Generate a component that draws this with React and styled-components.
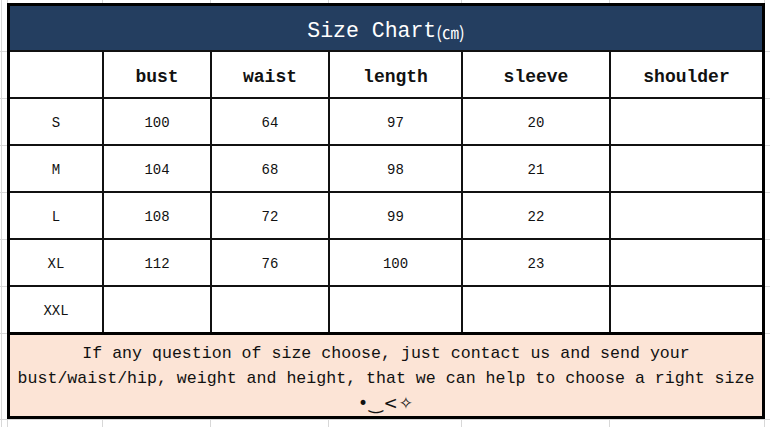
import React from 'react'
import styled, { createGlobalStyle } from 'styled-components';

const GlobalStyle = createGlobalStyle`
    html, body {
        margin: 0;
        padding: 0;
        background: #fff;
    }
`

const gridX = [1, 7, 102, 210, 328, 461, 609, 764];
const gridY = [51, 98, 145, 192, 239, 286, 333, 419];
const line = 'linear-gradient(#d8d8d8, #d8d8d8)';

const Sheet = styled.div`
    width: 770px;
    height: 427px;
    box-sizing: border-box;
    padding: 3px 0 0 7px;
    background-color: #fff;
    background-image: ${[...gridX, ...gridY].map(() => line).join(', ')};
    background-size: ${[...gridX.map(() => '1px 100%'), ...gridY.map(() => '100% 1px')].join(', ')};
    background-position: ${[...gridX.map(x => `${x}px 0`), ...gridY.map(y => `0 ${y}px`)].join(', ')};
    background-repeat: no-repeat;
    font-family: "Liberation Mono", "Noto Sans CJK SC", monospace;
    color: #111;
`

const Chart = styled.div`
    width: 758px;
    box-sizing: border-box;
    border: 3px solid #000;
    background: #fff;
`

const Title = styled.div`
    height: 44px;
    display: flex;
    align-items: center;
    justify-content: center;
    padding-top: 6px;
    box-sizing: border-box;
    background: #243e60;
    color: #fff;
    font-size: 21.5px;
`

const Unit = styled.span`
    font-size: 17px;
    font-family: "Noto Sans CJK SC", "Liberation Mono", monospace;
`

const Grid = styled.div`
    display: grid;
    grid-template-columns: 92px 108px 118px 133px 148px 1fr;
    grid-auto-rows: 47px;
`

const Cell = styled.div`
    display: flex;
    align-items: center;
    justify-content: center;
    box-sizing: border-box;
    border-top: 2px solid #111;
    border-left: ${props => props.$first ? 'none' : '2px solid #111'};
    font-size: ${props => props.$head ? '18px' : '14px'};
    font-weight: ${props => props.$head ? 'bold' : 'normal'};
    padding-top: ${props => props.$head ? '4px' : '2px'};
`

const Note = styled.div`
    height: 84px;
    box-sizing: border-box;
    border-top: 3px solid #000;
    background: #fce4d6;
    text-align: center;
    font-size: 16.6px;
    line-height: 25px;
    padding-top: 6px;
`

const Face = styled.span`
    font-family: "DejaVu Sans", sans-serif;
    font-size: 17px;
    letter-spacing: 1px;
`

const headers = ['', 'bust', 'waist', 'length', 'sleeve', 'shoulder'];
const rows = [
    ['S', '100', '64', '97', '20', ''],
    ['M', '104', '68', '98', '21', ''],
    ['L', '108', '72', '99', '22', ''],
    ['XL', '112', '76', '100', '23', ''],
    ['XXL', '', '', '', '', ''],
];

const App = () => {
    return (
        <>
            <GlobalStyle />
            <Sheet>
                <Chart>
                    <Title>Size Chart<Unit>(㎝)</Unit></Title>
                    <Grid>
                        {headers.map((h, i) => (
                            <Cell key={'h' + i} $head $first={i === 0}>{h}</Cell>
                        ))}
                        {rows.map((row, r) => row.map((v, i) => (
                            <Cell key={r + '-' + i} $first={i === 0}>{v}</Cell>
                        )))}
                    </Grid>
                    <Note>
                        If any question of size choose, just contact us and send your<br />
                        bust/waist/hip, weight and height, that we can help to choose a right size<br />
                        <Face>•‿&lt;✧</Face>
                    </Note>
                </Chart>
            </Sheet>
        </>
    )
}

export default App;
